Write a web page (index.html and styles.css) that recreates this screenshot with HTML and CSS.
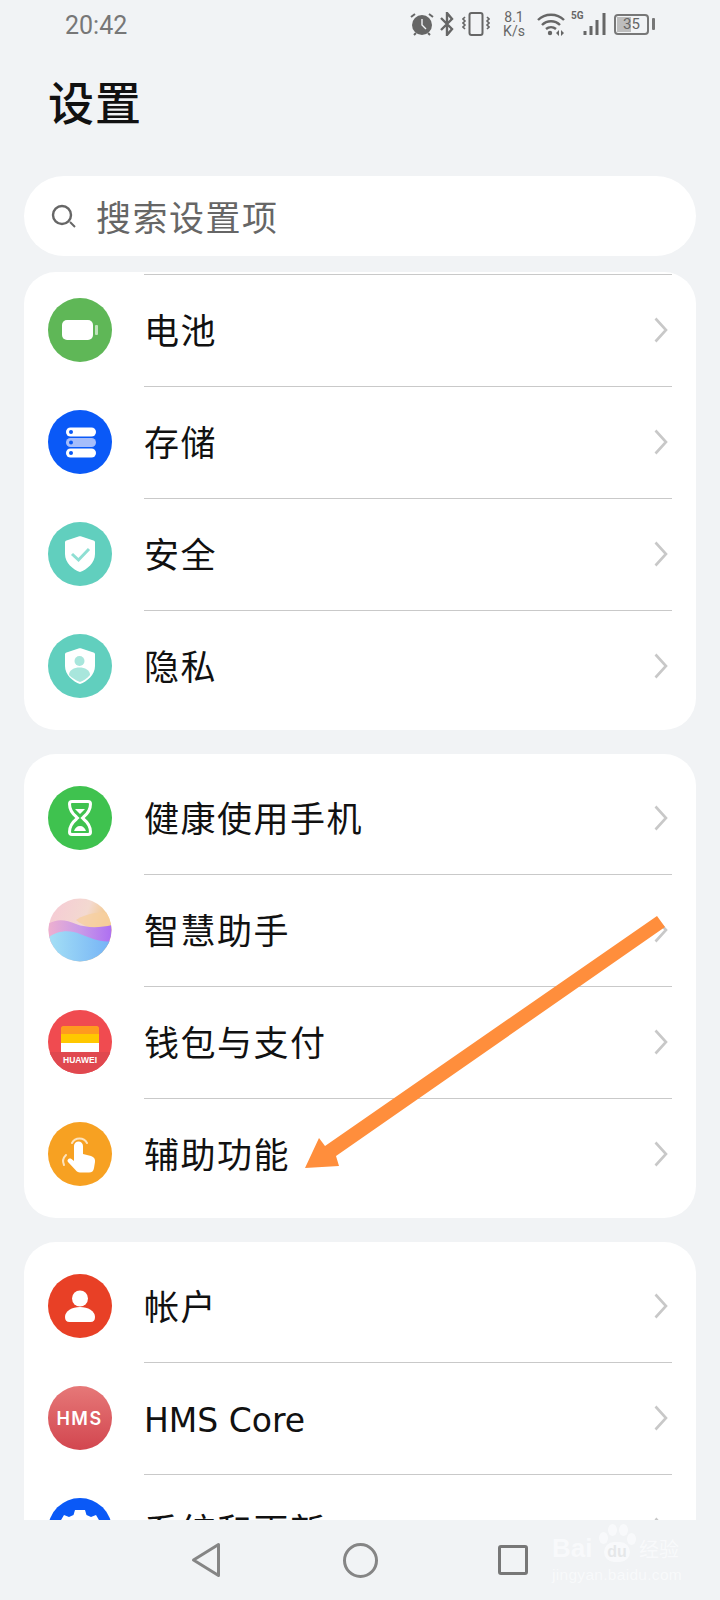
FILE: index.html
```html
<!DOCTYPE html>
<html lang="zh-CN">
<head>
    <meta charset="utf-8" />
    <title>设置</title>
    <link rel="stylesheet" href="styles.css">
</head>
<body>
    <div class="page">
        <div class="scroller">
            <div class="statusBar">
                <span class="time">20:42</span>
                <div class="statusIcons">
                    <svg class="alarmIcon" viewBox="0 0 24 24" width="24" height="24">
                        <circle cx="12" cy="13" r="10" fill="#666" />
                        <path d="M12 7v6l4 4" fill="none" stroke="#f1f3f5" stroke-width="1.4" />
                        <path d="M1 5l4-3M23 5l-4-3M6 21l-2 2M18 21l2 2" fill="none" stroke="#666" stroke-width="2" />
                    </svg>
                    <svg class="btIcon" viewBox="0 0 14 24" width="14" height="24">
                        <path d="M1 6l11 11-5 6V1l5 6L1 18" fill="none" stroke="#666" stroke-width="2.4" />
                    </svg>
                    <svg class="vibeIcon" viewBox="0 0 28 24" width="28" height="24">
                        <rect x="7.5" y="1" width="13" height="22" rx="2" fill="none" stroke="#666" stroke-width="2" />
                        <path d="M3 5l-2 2 2 2-2 2 2 2-2 2 2 2M25 5l2 2-2 2 2 2-2 2 2 2-2 2" fill="none" stroke="#666" stroke-width="1.6" />
                    </svg>
                    <div class="speed"><span>8.1</span><span>K/s</span></div>
                    <svg class="wifiIcon" viewBox="0 0 28 24" width="28" height="24">
                        <path d="M1 8c7-7 19-7 26 0M5 13c5-5 13-5 18 0M9 17c3-2.500 7-2.500 10 0" fill="none" stroke="#666" stroke-width="2.400" />
                        <circle cx="13" cy="21" r="2.200" fill="#666" />
                        <path d="M19 21l3-3v6zM24 18l3 3-3 3z" fill="#666" />
                    </svg>
                    <div class="signal">
                        <span class="signalLabel">5G</span>
                        <svg viewBox="0 0 24 24" width="24" height="24">
                            <path d="M2 19v4M8 14v9M14 8v15M21 1v22" stroke="#666" stroke-width="3" fill="none" />
                        </svg>
                    </div>
                    <div class="battery">
                        <div class="batteryBody"><div class="batteryFill"></div><span>35</span></div>
                        <div class="batteryNub"></div>
                    </div>
                </div>
            </div>

            <h1 class="title">设置</h1>

            <div class="searchBox">
                <svg viewBox="0 0 26 24" width="26" height="24">
                    <circle cx="11" cy="11" r="9" fill="none" stroke="#666" stroke-width="2.400" />
                    <path d="M19 18l5 5" stroke="#666" stroke-width="2" />
                </svg>
                <span>搜索设置项</span>
            </div>

            <div class="card cardClipped">
                <div class="row">
                    <svg class="rowIcon" viewBox="0 0 64 64">
                        <circle cx="32" cy="32" r="32" fill="#5fb757" />
                        <rect x="14" y="22" width="31" height="20" rx="5" fill="#fff" />
                        <rect x="47" y="27" width="3" height="10" rx="1" fill="#bfe3bb" />
                    </svg>
                    <span class="rowLabel">电池</span>
                    <svg class="chevron" viewBox="0 0 14 26"><path d="M1.500 1.500L12 13 1.500 24.500" /></svg>
                </div>
                <div class="row">
                    <svg class="rowIcon" viewBox="0 0 64 64">
                        <circle cx="32" cy="32" r="32" fill="#0a59f7" />
                        <rect x="18" y="17.500" width="30" height="9" rx="4.500" fill="#fff" />
                        <rect x="18" y="28" width="30" height="9" rx="4.500" fill="#a5bdfb" />
                        <rect x="18" y="38.500" width="30" height="9" rx="4.500" fill="#fff" />
                        <circle cx="23" cy="22" r="2" fill="#0a59f7" />
                        <circle cx="23" cy="32.500" r="2" fill="#0a59f7" />
                        <circle cx="23" cy="43" r="2" fill="#0a59f7" />
                    </svg>
                    <span class="rowLabel">存储</span>
                    <svg class="chevron" viewBox="0 0 14 26"><path d="M1.500 1.500L12 13 1.500 24.500" /></svg>
                </div>
                <div class="row">
                    <svg class="rowIcon" viewBox="0 0 64 64">
                        <circle cx="32" cy="32" r="32" fill="#61cfbe" />
                        <path d="M30.500 14.500c1-.5 2-.5 3 0l12 4c1 .4 1.500 1 1.500 2V32c0 9-8 15.500-15 18-7-2.500-15-9-15-18V20.500c0-1 .5-1.600 1.500-2z" fill="#fff" />
                        <path d="M24 32l6.500 6L41 27" fill="none" stroke="#8fdfd3" stroke-width="3" />
                    </svg>
                    <span class="rowLabel">安全</span>
                    <svg class="chevron" viewBox="0 0 14 26"><path d="M1.500 1.500L12 13 1.500 24.500" /></svg>
                </div>
                <div class="row">
                    <svg class="rowIcon" viewBox="0 0 64 64">
                        <circle cx="32" cy="32" r="32" fill="#61cfbe" />
                        <path d="M30.500 14.500c1-.5 2-.5 3 0l12 4c1 .4 1.500 1 1.500 2V32c0 9-8 15.500-15 18-7-2.500-15-9-15-18V20.500c0-1 .5-1.600 1.500-2z" fill="#fff" />
                        <circle cx="31.500" cy="27" r="5" fill="#a8e6dc" />
                        <path d="M21 41c0-5 5-7.500 10.500-7.500S42 36 42 41c-3 3.500-7 6-10 7-4-1.500-8-4-11-7z" fill="#a8e6dc" />
                    </svg>
                    <span class="rowLabel">隐私</span>
                    <svg class="chevron" viewBox="0 0 14 26"><path d="M1.500 1.500L12 13 1.500 24.500" /></svg>
                </div>
            </div>

            <div class="card">
                <div class="row">
                    <svg class="rowIcon" viewBox="0 0 64 64">
                        <circle cx="32" cy="32" r="32" fill="#3fc24f" />
                        <path d="M24 15.500h16c1.500 0 2.500 1 2.500 2.500 0 5-2 9-7 13l-1 1 1 1c5 4 7 8 7 13 0 1.500-1 2.500-2.500 2.500H24c-1.500 0-2.500-1-2.500-2.500 0-5 2-9 7-13l1-1-1-1c-5-4-7-8-7-13 0-1.500 1-2.500 2.500-2.500z" fill="none" stroke="#fff" stroke-width="3" />
                        <path d="M27 23h10l-5 5zM26 45c1-3 3-5 6-5s5 2 6 5z" fill="#fff" />
                    </svg>
                    <span class="rowLabel">健康使用手机</span>
                    <svg class="chevron" viewBox="0 0 14 26"><path d="M1.500 1.500L12 13 1.500 24.500" /></svg>
                </div>
                <div class="row">
                    <svg class="rowIcon" viewBox="0 0 64 64">
                        <defs>
                            <clipPath id="celiaClip"><circle cx="32" cy="32" r="31.500" /></clipPath>
                            <linearGradient id="celiaTop" x1="0" y1="0" x2="1" y2="0.400">
                                <stop offset="0" stop-color="#f6c9d6" />
                                <stop offset="0.6" stop-color="#f3d9d0" />
                                <stop offset="1" stop-color="#f3c26f" />
                            </linearGradient>
                            <linearGradient id="celiaMid" x1="0" y1="0" x2="1" y2="0">
                                <stop offset="0" stop-color="#eeb0cf" />
                                <stop offset="0.5" stop-color="#c99ae8" />
                                <stop offset="1" stop-color="#ad6ff2" />
                            </linearGradient>
                            <linearGradient id="celiaLow" x1="0" y1="0" x2="1" y2="0">
                                <stop offset="0" stop-color="#a5e0f5" />
                                <stop offset="1" stop-color="#74b2f6" />
                            </linearGradient>
                        </defs>
                        <g clip-path="url(#celiaClip)">
                            <rect width="64" height="64" fill="url(#celiaTop)" />
                            <path d="M28 22c12-8 26-8 36-8v16c-14 2-26 0-36-8z" fill="#f6d0a0" opacity="0.800" />
                            <path d="M0 26c10-6 18-4 28 0s24 4 36 1v20H0z" fill="url(#celiaMid)" />
                            <path d="M0 40c10-8 22-8 32-4s22 9 32 7v21H0z" fill="url(#celiaLow)" />
                        </g>
                    </svg>
                    <span class="rowLabel">智慧助手</span>
                    <svg class="chevron" viewBox="0 0 14 26"><path d="M1.500 1.500L12 13 1.500 24.500" /></svg>
                </div>
                <div class="row">
                    <svg class="rowIcon" viewBox="0 0 64 64">
                        <defs>
                            <clipPath id="walletClip"><circle cx="32" cy="32" r="32" /></clipPath>
                        </defs>
                        <g clip-path="url(#walletClip)">
                            <rect width="64" height="64" fill="#f04b50" />
                            <rect y="42" width="64" height="22" fill="#e0484f" />
                        </g>
                        <path d="M15 16h34c1 0 2 1 2 2v6H13v-6c0-1 1-2 2-2z" fill="#ff9a1f" />
                        <rect x="13" y="24" width="38" height="9" fill="#ffc800" />
                        <rect x="13" y="33" width="38" height="9" fill="#fff" />
                        <text class="huaweiText" x="32" y="53" text-anchor="middle">HUAWEI</text>
                    </svg>
                    <span class="rowLabel">钱包与支付</span>
                    <svg class="chevron" viewBox="0 0 14 26"><path d="M1.500 1.500L12 13 1.500 24.500" /></svg>
                </div>
                <div class="row">
                    <svg class="rowIcon" viewBox="0 0 64 64">
                        <circle cx="32" cy="32" r="32" fill="#f7a122" />
                        <path d="M24 21a8.500 8.500 0 0 1 15 0M18 33c-3 3-3.500 7-2 10" fill="none" stroke="#fde3bd" stroke-width="2" stroke-linecap="round" />
                        <path d="M26 24a4.500 4.500 0 0 1 9 0v8l8 2c3 1 4.500 3 4 6l-1 6c-.5 3-2 4.500-5 4.500H32c-2 0-3.500-1-4.500-2.500L20 40c-1.500-2 1-4.500 3.500-3l2.500 2z" fill="#fff" />
                    </svg>
                    <span class="rowLabel">辅助功能</span>
                    <svg class="chevron" viewBox="0 0 14 26"><path d="M1.500 1.500L12 13 1.500 24.500" /></svg>
                </div>
            </div>

            <div class="card">
                <div class="row">
                    <svg class="rowIcon" viewBox="0 0 64 64">
                        <circle cx="32" cy="32" r="32" fill="#e84026" />
                        <circle cx="32" cy="24.500" r="8" fill="#fff" />
                        <path d="M17 43c0-6 7-10 15-10s15 4 15 10c0 3.500-1.500 5-4.500 5h-21c-3 0-4.500-1.500-4.500-5z" fill="#fff" />
                    </svg>
                    <span class="rowLabel">帐户</span>
                    <svg class="chevron" viewBox="0 0 14 26"><path d="M1.500 1.500L12 13 1.500 24.500" /></svg>
                </div>
                <div class="row">
                    <svg class="rowIcon" viewBox="0 0 64 64">
                        <defs>
                            <linearGradient id="hmsFill" x1="0" y1="0" x2="0" y2="1">
                                <stop offset="0" stop-color="#e67878" />
                                <stop offset="1" stop-color="#d2464f" />
                            </linearGradient>
                        </defs>
                        <circle cx="32" cy="32" r="32" fill="url(#hmsFill)" />
                        <text class="hmsText" x="31.500" y="38.500" text-anchor="middle">HMS</text>
                    </svg>
                    <span class="rowLabel rowLabelLatin">HMS Core</span>
                    <svg class="chevron" viewBox="0 0 14 26"><path d="M1.500 1.500L12 13 1.500 24.500" /></svg>
                </div>
                <div class="row">
                    <svg class="rowIcon" viewBox="0 0 64 64">
                        <circle cx="32" cy="32" r="32" fill="#0a59f7" />
                        <path d="M27 12h10l1.500 5 4.500 2 5-2 5 8.500-4 3.500v5l4 3.500-5 8.500-5-2-4.500 2-1.500 5H27l-1.500-5-4.500-2-5 2-5-8.500 4-3.500v-5l-4-3.500 5-8.500 5 2 4.500-2z" fill="#fff" />
                    </svg>
                    <span class="rowLabel">系统和更新</span>
                    <svg class="chevron" viewBox="0 0 14 26"><path d="M1.500 1.500L12 13 1.500 24.500" /></svg>
                </div>
            </div>
        </div>

        <div class="navBar">
            <svg viewBox="0 0 30 36" width="30" height="36">
                <path d="M27.500 2.500v31L2.500 18z" fill="none" stroke="#858585" stroke-width="3" stroke-linejoin="round" />
            </svg>
            <div class="navCircle"></div>
            <div class="navSquare"></div>
        </div>

        <!-- annotation drawn on top of the screenshot -->
        <svg class="annotation" viewBox="0 0 720 1600" width="720" height="1600">
            <path d="M657 916L665 927 336 1156 339 1166 305 1168 319 1138 325 1146z" fill="#ff8e3c" />
        </svg>

        <div class="watermark">
            <div class="watermarkTop">
                <span class="watermarkBai">Bai</span>
                <div class="paw">
                    <i></i><i></i><i></i><i></i>
                    <span>du</span>
                </div>
                <span class="watermarkCn">经验</span>
            </div>
            <div class="watermarkUrl">jingyan.baidu.com</div>
        </div>
    </div>
</body>
</html>
```

FILE: styles.css
```css
* {
    box-sizing: border-box;
}
html, body {
    margin: 0;
    padding: 0;
}
body {
    font-family: "Noto Sans CJK SC", "Noto Sans", sans-serif;
    background-color: #f1f3f5;
    color: #111;
}
.page {
    position: relative;
    display: flex;
    flex-direction: column;
    width: 720px;
    height: 1600px;
    overflow: hidden;
}
.scroller {
    flex: 1;
    min-height: 0;
    overflow: hidden;
}

/* status bar */
.statusBar {
    display: flex;
    justify-content: space-between;
    align-items: center;
    height: 48px;
    padding: 0 65px;
}
.time {
    padding-top: 3px;
    font-family: Roboto, sans-serif;
    font-size: 25px;
    color: #777;
}
.statusIcons {
    display: flex;
    align-items: center;
    color: #666;
}
.alarmIcon {
    margin-right: 6px;
}
.btIcon {
    margin-right: 8px;
}
.vibeIcon {
    margin-right: 12px;
}
.speed {
    display: flex;
    flex-direction: column;
    align-items: center;
    width: 24px;
    margin-right: 11px;
    font-family: Roboto, sans-serif;
    font-size: 14px;
    line-height: 14px;
}
.wifiIcon {
    margin-right: 6px;
}
.signal {
    display: flex;
    align-items: flex-start;
    margin-right: 7px;
}
.signalLabel {
    width: 12px;
    margin-top: -3px;
    font-family: Roboto, sans-serif;
    font-size: 10px;
    font-weight: 700;
    line-height: 14px;
}
.battery {
    display: flex;
    align-items: center;
    gap: 3px;
}
.batteryBody {
    position: relative;
    display: flex;
    align-items: center;
    justify-content: center;
    width: 35px;
    height: 21px;
    border: 2px solid #777;
    border-radius: 4px;
    font-family: Roboto, sans-serif;
    font-size: 15px;
}
.batteryBody span {
    position: relative;
}
.batteryFill {
    position: absolute;
    top: 1px;
    bottom: 1px;
    left: 1px;
    width: 45%;
    background-color: #bdbdbd;
}
.batteryNub {
    width: 3px;
    height: 12px;
    border-radius: 1px;
    background-color: #777;
}

/* header and search */
.title {
    height: 128px;
    margin: 0;
    padding: 22px 0 0 48px;
    font-size: 46px;
    font-weight: 500;
    letter-spacing: 1px;
    line-height: 60px;
}
.searchBox {
    display: flex;
    align-items: center;
    height: 80px;
    margin: 0 24px 16px;
    padding-left: 27px;
    border-radius: 40px;
    background-color: #fff;
    color: #666;
    font-size: 35px;
    letter-spacing: 1.500px;
    line-height: 76px;
}
.searchBox svg {
    margin-right: 19px;
}

/* list cards */
.card {
    margin: 0 24px 24px;
    padding: 8px 0;
    border-radius: 32px;
    background-color: #fff;
}
.cardClipped {
    padding-top: 2px;
}
.row {
    display: flex;
    align-items: center;
    height: 112px;
    padding-left: 24px;
    position: relative;
}
.row::before {
    content: "";
    position: absolute;
    top: 0;
    left: 120px;
    right: 24px;
    height: 1px;
    background-color: #c9c9c9;
}
.card:not(.cardClipped) .row:first-child::before {
    display: none;
}
.rowIcon {
    flex: none;
    width: 64px;
    height: 64px;
    margin-right: 32px;
}
.rowLabel {
    flex: 1;
    padding-bottom: 3px;
    font-size: 35px;
    letter-spacing: 1.500px;
}
.rowLabelLatin {
    padding-top: 4px;
    padding-bottom: 0;
    font-family: "DejaVu Sans", sans-serif;
    font-size: 33px;
    letter-spacing: 0;
}
.chevron {
    flex: none;
    width: 14px;
    height: 26px;
    margin-right: 28px;
    fill: none;
    stroke: #c8c8c8;
    stroke-width: 2.6;
}
.huaweiText {
    font-family: "Liberation Sans", sans-serif;
    font-size: 8.500px;
    font-weight: 700;
    fill: #fff;
}
.hmsText {
    font-family: Inter, sans-serif;
    font-size: 18px;
    font-weight: 600;
    letter-spacing: 1.500px;
    fill: #fff;
}

/* navigation bar */
.navBar {
    flex: none;
    display: flex;
    align-items: center;
    height: 80px;
    padding: 0 0 0 191px;
    background-color: #f1f3f5;
}
.navCircle {
    width: 35px;
    height: 35px;
    margin-left: 122px;
    border: 3px solid #858585;
    border-radius: 50%;
}
.navSquare {
    width: 30px;
    height: 30px;
    margin-left: 120px;
    border: 3px solid #777;
    border-radius: 3px;
}

/* overlays */
.annotation {
    position: absolute;
    top: 0;
    left: 0;
    pointer-events: none;
}
.watermark {
    position: absolute;
    top: 1522px;
    left: 552px;
    width: 132px;
    color: #fbfcfd;
    font-family: "Liberation Sans", sans-serif;
    opacity: 0.75;
}
.watermarkTop {
    display: flex;
    align-items: flex-end;
    height: 40px;
}
.watermarkBai {
    width: 46px;
    font-size: 26px;
    font-weight: 700;
    line-height: 28px;
}
.paw {
    position: relative;
    width: 38px;
    height: 38px;
}
.paw i {
    position: absolute;
    width: 9px;
    height: 12px;
    border-radius: 50%;
    background-color: #fbfcfd;
}
.paw i:nth-child(1) { top: 8px; left: 1px; }
.paw i:nth-child(2) { top: 0; left: 10px; }
.paw i:nth-child(3) { top: 0; left: 21px; }
.paw i:nth-child(4) { top: 9px; left: 29px; }
.paw span {
    position: absolute;
    top: 18px;
    left: 6px;
    width: 26px;
    height: 20px;
    border-radius: 10px;
    background-color: #fbfcfd;
    color: #e2e4e6;
    font-size: 16px;
    font-weight: 700;
    line-height: 19px;
    text-align: center;
}
.watermarkCn {
    margin-left: 3px;
    font-family: "Noto Sans CJK SC", sans-serif;
    font-size: 20px;
    line-height: 26px;
}
.watermarkUrl {
    margin-top: 3px;
    font-size: 15.500px;
    letter-spacing: 0.300px;
    line-height: 20px;
}
```
